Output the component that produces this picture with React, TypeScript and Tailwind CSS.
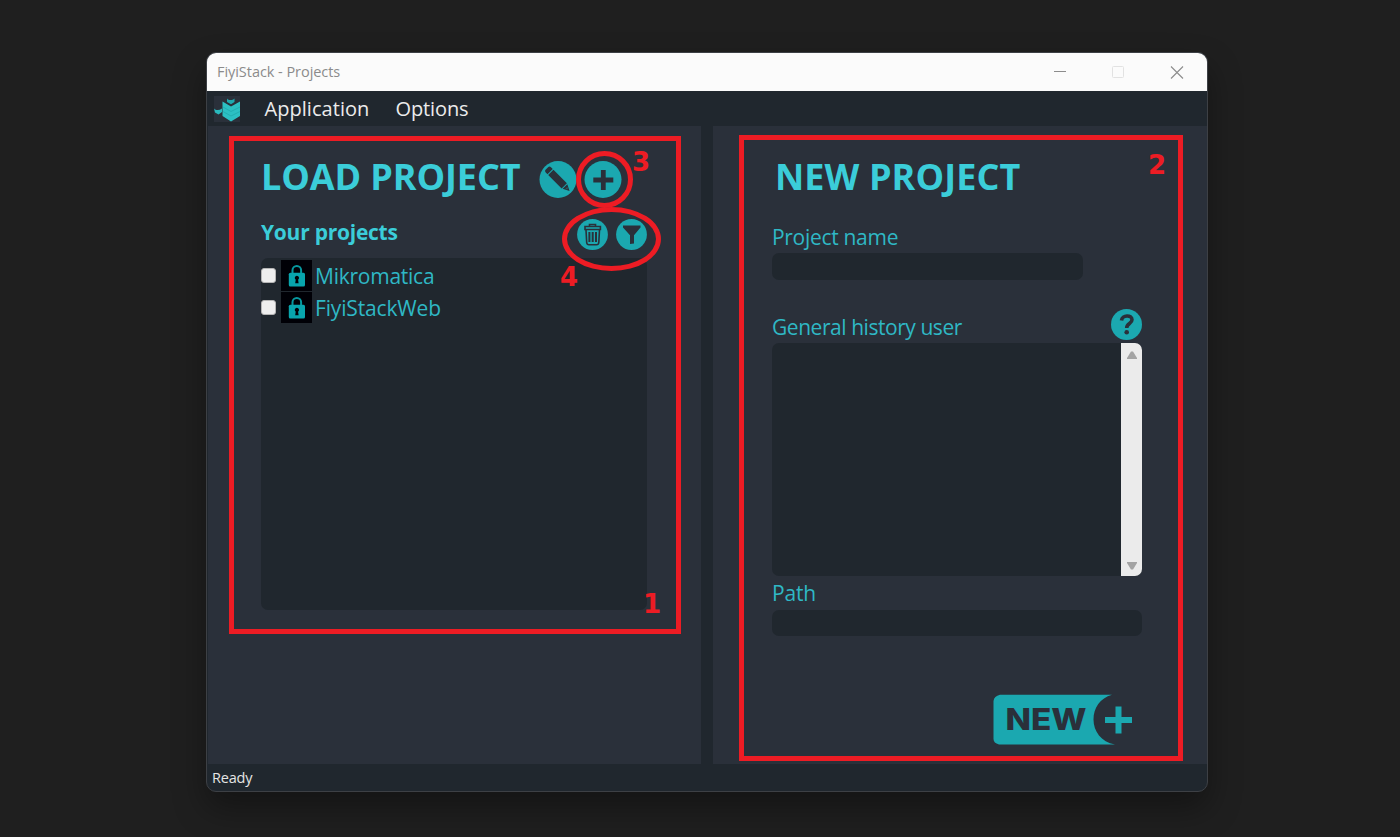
import type { ReactNode } from "react";

const label = "block whitespace-nowrap font-['Open_Sans','Noto_Sans',sans-serif] text-[#2fb8c5]";

function Logo() {
  return (
    <svg className="h-[26px] w-[26px]" viewBox="0 0 26 26">
      <rect width="26" height="26" fill="#2a303a" />
      <path d="M0 12.500c2 2 5 2 8 0v3.500L4.500 18.500 1 16.500Z" fill="#29b9bd" />
      <path d="M13 2.500c1.500 2 5.500 2 7.500 0V6L17 8.200 13 6Z" fill="#1fa9ae" />
      <path d="M8.500 5.500 17 10.500l9-5V20l-9 5.500L8.500 20Z" fill="#2cc0c3" />
      <path d="m9 11 8 4.500 9-4.500M9 15.500l8 4.500 9-4.500" fill="none" stroke="#21a9ad" strokeWidth=".8" />
    </svg>
  );
}

function PencilIcon() {
  return (
    <svg className="h-[38px] w-[38px]" viewBox="0 0 38 38">
      <circle cx="19" cy="19.500" r="18.500" fill="#1ba8b0" />
      <g transform="translate(9 9.500) rotate(45)" fill="#2a303a">
        <path d="M.5-3.700H3v7.400H.5Q-1.500 3.700-1.500 2v-4Q-1.500-3.700.5-3.700ZM4-3.700h19v7.400H4ZM24-3.300 30.500 0 24 3.300Z" />
        <path d="M26-1.500 28 0l-2 1.500Z" fill="#1ba8b0" fillOpacity=".4" />
      </g>
    </svg>
  );
}

function PlusIcon() {
  return (
    <svg className="h-[38px] w-[38px]" viewBox="0 0 38 38">
      <circle cx="19" cy="19.500" r="18.500" fill="#1ba8b0" />
      <path d="M19.300 10v20M9.300 20h20" stroke="#2a303a" strokeWidth="4.800" />
    </svg>
  );
}

function TrashIcon() {
  return (
    <svg className="h-8 w-8" viewBox="0 0 32 32">
      <circle cx="16.500" cy="16.500" r="15.400" fill="#1ba8b0" />
      <g fill="none" stroke="#2a303a" strokeWidth="1.600">
        <path d="M13.500 8.500V6.500h6v2M9 8.500h15.400v3H9ZM10 12l.7 12.500q.2 2.300 2.300 2.300h7.500q2.100 0 2.300-2.300L23.500 12" />
        <path d="M13.400 14v10M16.700 14v10M20 14v10" strokeWidth="2" />
      </g>
    </svg>
  );
}

function FilterIcon() {
  return (
    <svg className="h-8 w-8" viewBox="0 0 32 32">
      <circle cx="16.500" cy="16.500" r="15.400" fill="#1ba8b0" />
      <path d="M8 7.500h17.500v2L19 17.300v8.200l-4 .5v-8.700L8 9.500Z" fill="#2a303a" />
    </svg>
  );
}

function HelpIcon() {
  return (
    <svg className="h-8 w-8" viewBox="0 0 32 32">
      <circle cx="16.500" cy="16.500" r="15.500" fill="#1ba8b0" />
      <path d="M11.500 12.500c.5-5.700 10.500-6 10.500-.700 0 4-5.300 3.500-5.300 8.200" fill="none" stroke="#2a303a" strokeWidth="3.600" />
      <circle cx="16.700" cy="24.300" r="2.300" fill="#2a303a" />
    </svg>
  );
}

function LockIcon() {
  return (
    <svg className="h-[31px] w-[31px]" viewBox="0 0 31 31">
      <rect width="31" height="31" fill="#000006" />
      <path d="M11.500 14v-3.700a4.300 4.300 0 0 1 8.600 0V14" fill="none" stroke="#07989f" strokeWidth="2" />
      <rect x="7.800" y="12.800" width="16.200" height="13.700" rx="1.500" fill="#08a5ad" />
      <path d="M15.900 15.700a2.200 2.200 0 0 1 1.200 4l.5 3.500h-3.400l.5-3.500a2.200 2.200 0 0 1 1.200-4Z" fill="#000006" />
    </svg>
  );
}

function ProjectRow({ name, spacing }: { name: string; spacing: string }) {
  return (
    <div className="flex h-[32.400px] items-start">
      <span className="mt-[9px] h-[15px] w-[15px] rounded-[3px] border border-[#b5b5b5] bg-[#eee]" />
      <span className="ml-[5px] mt-px"><LockIcon /></span>
      <span className={`${label} ml-[3px] text-[21px] leading-[34px] ${spacing}`}>{name}</span>
    </div>
  );
}

function Mark({ children, place }: { children: ReactNode; place: string }) {
  return <span className={`absolute font-['DejaVu_Sans',sans-serif] text-[26px] font-bold leading-[26px] text-[#ed1c24] ${place}`}>{children}</span>;
}

function Annotations() {
  return (
    <div className="pointer-events-none absolute inset-0">
      <div className="absolute left-[229px] top-[136px] h-[498px] w-[452px] border-[5px] border-[#ed1c24]" />
      <div className="absolute left-[739px] top-[135px] h-[626px] w-[444px] border-[5px] border-[#ed1c24]" />
      <div className="absolute left-[576px] top-[151px] h-[57px] w-[57px] rounded-[50%] border-[5px] border-[#ed1c24]" />
      <div className="absolute left-[562px] top-[207px] h-[64px] w-[99px] rounded-[50%] border-[5px] border-[#ed1c24]" />
      <Mark place="left-[643px] top-[591px]">1</Mark>
      <Mark place="left-[1148px] top-[152px]">2</Mark>
      <Mark place="left-[632px] top-[149px]">3</Mark>
      <Mark place="left-[560px] top-[264px]">4</Mark>
    </div>
  );
}

export default function App() {
  return (
    <main className="relative h-[837px] w-[1400px] overflow-hidden bg-[#1f1f1f] pl-[206px] pt-[52px] font-['Open_Sans','Noto_Sans',sans-serif]">
      <div className="flex h-[740px] w-[1002px] flex-col overflow-hidden rounded-[10px] border border-[#3d4045] bg-[#20272e] shadow-[0_16px_32px_rgba(0,0,0,0.35)]">
        <header className="flex h-[38px] shrink-0 items-center justify-between bg-[#fbfbfb] pl-[10px] pr-[23px]">
          <span className="text-[14.500px] tracking-[-0.050px] text-[#8b8b8b]">FiyiStack - Projects</span>
          <svg className="h-[14px] w-[132px]" viewBox="0 0 132 14" fill="none">
            <path d="M2 6.500h12" stroke="#8c8c8c" />
            <rect x="60.500" y="1.500" width="11" height="11" rx="1" stroke="#e2e2e2" />
            <path d="m119 1.500 12 12m0-12-12 12" stroke="#8c8c8c" strokeWidth="1.100" />
          </svg>
        </header>
        <nav className="flex h-[35px] shrink-0 items-center pl-[7px] text-[20px] text-[#ececec]">
          <Logo />
          <span className="ml-[24.500px] tracking-[0.050px]">Application</span>
          <span className="ml-[26px] tracking-[-0.100px]">Options</span>
        </nav>
        <div className="flex h-[638px] shrink-0 gap-3 pl-px">
          <section className="w-[493px] bg-[#2a303a] pl-[53px] pt-[34px]">
            <div className="flex h-[40px] w-[386px]">
              <h1 className="-mt-[8px] w-[278px] whitespace-nowrap text-[36px] font-bold leading-[50px] tracking-[-0.100px] text-[#3bcdd9]">LOAD PROJECT</h1>
              <div className="flex gap-[7px]"><PencilIcon /><PlusIcon /></div>
            </div>
            <div className="mt-[18px] flex h-[40px] w-[386px] justify-between">
              <h2 className="-mt-px text-[21px] font-bold leading-[30px] tracking-[-0.250px] text-[#3bcdd9]">Your projects</h2>
              <div className="flex gap-[7px]"><TrashIcon /><FilterIcon /></div>
            </div>
            <div className="h-[352px] w-[386px] rounded-[7px] bg-[#20272e] pt-[1px]">
              <ProjectRow name="Mikromatica" spacing="tracking-[-0.250px]" />
              <ProjectRow name="FiyiStackWeb" spacing="tracking-[-0.150px]" />
            </div>
          </section>
          <section className="w-[494px] bg-[#2a303a] pl-[59px] pt-[26px]">
            <h1 className="pl-[3px] text-[36px] font-bold leading-[50px] tracking-[0.080px] text-[#3bcdd9]">NEW PROJECT</h1>
            <span className={`${label} mt-[20px] text-[21px] leading-[30px] tracking-[-0.300px]`}>Project name</span>
            <div className="mt-px h-[27px] w-[311px] rounded-[7px] bg-[#20272e]" />
            <div className="mt-[28px] flex h-[36px] w-[370px] justify-between">
              <span className={`${label} mt-[4px] text-[21px] leading-[30px] tracking-[-0.450px]`}>General history user</span>
              <HelpIcon />
            </div>
            <div className="-mt-px flex h-[233px] w-[370px] justify-end overflow-hidden rounded-[7px] bg-[#20272e]">
              <div className="flex w-[21px] flex-col items-center justify-between bg-[#ebebeb] pb-[6px] pt-[8px]">
                <svg className="h-2 w-[10px]" viewBox="0 0 10 8"><path d="M4 .5h2L10 7v1H0V7Z" fill="#a3a3a3" /></svg>
                <svg className="h-2 w-[10px]" viewBox="0 0 10 8"><path d="M0 0h10v1L6 7.500H4L0 1Z" fill="#a3a3a3" /></svg>
              </div>
            </div>
            <span className={`${label} mt-[2px] text-[21px] leading-[30px] tracking-[-0.200px]`}>Path</span>
            <div className="mt-[2px] h-[26px] w-[370px] rounded-[7px] bg-[#20272e]" />
            <svg className="ml-[221px] mt-[58px] h-[51px] w-[142px]" viewBox="0 0 142 51">
              <path d="M7 .700H119C107 4 100.500 14 100.500 25.500S108 48 122 50.500H6Q.5 49 .5 45V7Q1 2 7 .700Z" fill="#1ba8b0" />
              <path d="M125.500 12.500v27M112 26h27" stroke="#1ba8b0" strokeWidth="6" />
              <text x="12.500" y="36" fill="#2a303a" fontFamily="Inter, sans-serif" fontSize="30" fontWeight="800" textLength="81" lengthAdjust="spacingAndGlyphs">NEW</text>
            </svg>
          </section>
        </div>
        <footer className="flex h-[27px] shrink-0 items-center pl-[5px] text-[14.500px] tracking-[-0.200px] text-[#e5e5e5]">Ready</footer>
      </div>
      <Annotations />
    </main>
  );
}
